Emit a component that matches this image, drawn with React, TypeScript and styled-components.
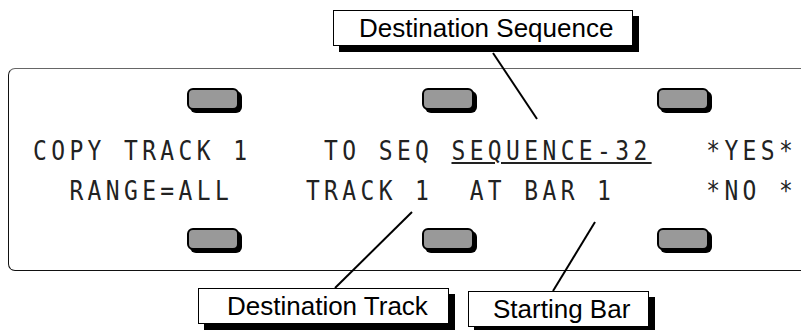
import React from 'react';
import styled, { createGlobalStyle } from 'styled-components';

const GlobalStyle = createGlobalStyle`
  html, body {
    margin: 0;
    padding: 0;
    background: #fff;
  }
  body {
    font-family: "Liberation Sans", Arial, sans-serif;
  }
`;

const Page = styled.div`
  position: relative;
  box-sizing: border-box;
  width: 801px;
  height: 330px;
  padding-top: 10px;
  overflow: hidden;
  background: #fff;
`;

const TopCallouts = styled.div`
  display: flex;
  padding-left: 333px;
`;

const BottomCallouts = styled.div`
  display: flex;
  align-items: flex-start;
  gap: 19px;
  margin-top: 17px;
  padding-left: 198px;
`;

interface CalloutProps {
  $width: number;
  $pad: number;
  $drop?: number;
}

const Callout = styled.div<CalloutProps>`
  box-sizing: border-box;
  flex: none;
  width: ${p => p.$width}px;
  height: 36px;
  margin-top: ${p => p.$drop || 0}px;
  padding: 1px 0 0 ${p => p.$pad}px;
  border: 1.5px solid #000;
  background: #fff;
  box-shadow: 6px 6px 0 #000;
  font-size: 26px;
  line-height: 32px;
  color: #000;
  white-space: nowrap;
`;

const Panel = styled.div`
  box-sizing: border-box;
  width: 900px;
  min-width: 900px;
  margin: 22px 0 0 8px;
  padding: 19px 0 19.5px 0;
  border: 1.5px solid #111;
  border-top: 1px solid #666;
  border-radius: 7px;
  display: flex;
  flex-direction: column;
`;

const KeyRow = styled.div<{ $top?: number }>`
  display: flex;
  gap: 183px;
  margin-top: ${p => p.$top || 0}px;
  padding-left: 177.5px;
`;

const SoftKey = styled.div`
  box-sizing: border-box;
  flex: none;
  width: 52px;
  height: 22px;
  border: 2px solid #000;
  border-radius: 6px;
  background: #999;
  box-shadow: 3px 3px 0 #000;
`;

const Lcd = styled.div`
  margin-top: 20.5px;
  padding-left: 23.5px;
  font-family: "DejaVu Sans Mono", "Liberation Mono", monospace;
  font-size: 27px;
  line-height: 40px;
  letter-spacing: 5.15px;
  color: #222;
  white-space: pre;
`;

const LcdLine = styled.div`
  height: 40px;
  transform: scaleX(0.85);
  transform-origin: 0 0;
`;

const Field = styled.span`
  text-decoration: underline;
  text-decoration-thickness: 2px;
  text-underline-offset: 2px;
`;

const Leaders = styled.svg`
  position: absolute;
  left: 0;
  top: 0;
  pointer-events: none;
`;

const leaders = [
  { x1: 493, y1: 53, x2: 537, y2: 119 },
  { x1: 412, y1: 212, x2: 335, y2: 288 },
  { x1: 595, y1: 222, x2: 553, y2: 291 },
];

export default function App() {
  return (
    <Page>
      <GlobalStyle />
      <TopCallouts>
        <Callout $width={300} $pad={25}>Destination Sequence</Callout>
      </TopCallouts>
      <Panel>
        <KeyRow>
          <SoftKey />
          <SoftKey />
          <SoftKey />
        </KeyRow>
        <Lcd>
          <LcdLine>
            {'COPY TRACK 1    TO SEQ '}
            <Field>SEQUENCE-32</Field>
            {'   *YES*'}
          </LcdLine>
          <LcdLine>{'  RANGE=ALL    TRACK 1  AT BAR 1     *NO *'}</LcdLine>
        </Lcd>
        <KeyRow $top={17.5}>
          <SoftKey />
          <SoftKey />
          <SoftKey />
        </KeyRow>
      </Panel>
      <BottomCallouts>
        <Callout $width={251} $pad={28}>Destination Track</Callout>
        <Callout $width={181} $pad={24} $drop={3}>Starting Bar</Callout>
      </BottomCallouts>
      <Leaders width={801} height={330} viewBox="0 0 801 330">
        {leaders.map((l, i) => (
          <line key={i} {...l} stroke="#000" strokeWidth={2} />
        ))}
      </Leaders>
    </Page>
  );
}
